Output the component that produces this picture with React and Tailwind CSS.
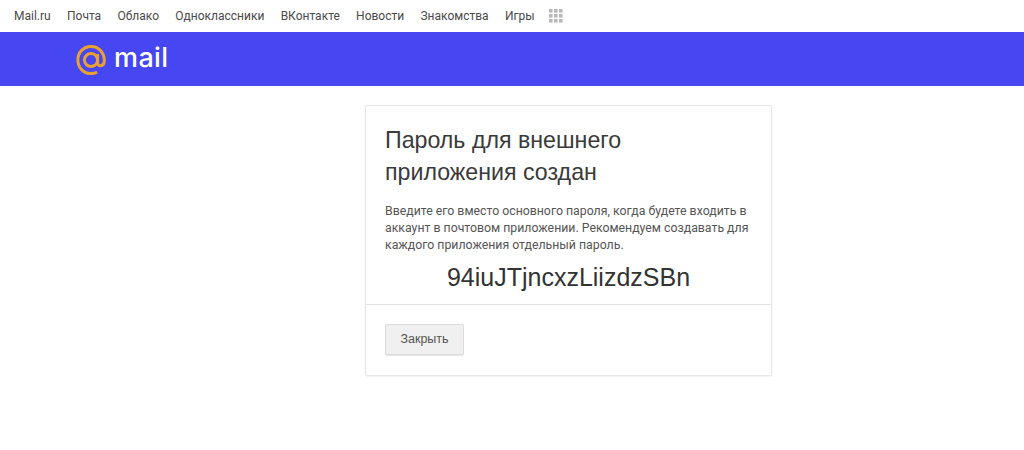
const links = ["Mail.ru", "Почта", "Облако", "Одноклассники", "ВКонтакте", "Новости", "Знакомства", "Игры"];

function Logo() {
  return (
    <div className="flex items-center gap-[8px]">
      <svg className="mt-[1px]" width="30" height="30" viewBox="0 0 31 32" fill="none" stroke="#e8a02e" strokeWidth="3.200">
        <circle cx="15.500" cy="16" r="7" />
        <path d="M22.500 9.500v9.500c0 4.500 6.700 4.500 7.200-1.500 0.700-8.500-5.700-16-14.200-16C7.500 1.500 1.500 8 1.500 16s6 14.500 14 14.500c2.500 0 4.500-0.500 6.500-1.500" />
      </svg>
      <span className="font-['Inter',sans-serif] text-[27px] leading-none font-medium tracking-[0.4px] text-white mt-[-4px]">mail</span>
    </div>
  );
}

function AppsIcon() {
  return (
    <svg className="-ml-[2px] -mt-[1px]" width="14" height="14" viewBox="0 0 14 14" fill="#b8b8b8">
      {[0, 5, 10].map((y) =>
        [0, 5, 10].map((x) => <rect key={x + "-" + y} x={x} y={y} width="3.600" height="3.600" />)
      )}
    </svg>
  );
}

export default function App() {
  return (
    <div className="w-[1024px] h-[450px] bg-white overflow-hidden font-['Liberation_Sans',Arial,sans-serif]">
      <nav className="h-8 flex items-center gap-[16.3px] pl-[14px] text-xs text-[#4a4a4a] font-['Roboto',sans-serif]">
        {links.map((l) => (
          <a key={l}>{l}</a>
        ))}
        <AppsIcon />
      </nav>
      <header className="h-[54px] bg-[#4646f2] flex items-center pl-[76px]">
        <Logo />
      </header>
      <main className="pt-[19px] pl-[365px]">
        <div className="w-[407px] h-[271px] border border-[#e6e6e6] rounded-[2px] shadow-[0_1px_2px_rgba(0,0,0,0.06)]">
          <div className="h-[199px] border-b border-[#e2e2e2] px-[19px] pt-[18px]">
            <h1 className="text-[23.200px] leading-[32px] text-[#3a3a3a]">Пароль для внешнего приложения создан</h1>
            <p className="mt-[15px] text-[12.300px] leading-[17px] text-[#555] font-['Roboto',sans-serif]">
              Введите его вместо основного пароля, когда будете входить в аккаунт в почтовом приложении. Рекомендуем создавать для каждого приложения отдельный пароль.
            </p>
            <div className="mt-[7px] text-center text-[25px] leading-[32px] text-[#333]">94iuJTjncxzLiizdzSBn</div>
          </div>
          <div className="px-[19px] pt-[19px]">
            <button className="w-[79px] h-[31px] bg-[#f0f0f0] border border-[#dcdcdc] rounded-[2px] text-[12.500px] text-[#555] shadow-[0_1px_1px_rgba(0,0,0,0.1)]">
              Закрыть
            </button>
          </div>
        </div>
      </main>
    </div>
  );
}
